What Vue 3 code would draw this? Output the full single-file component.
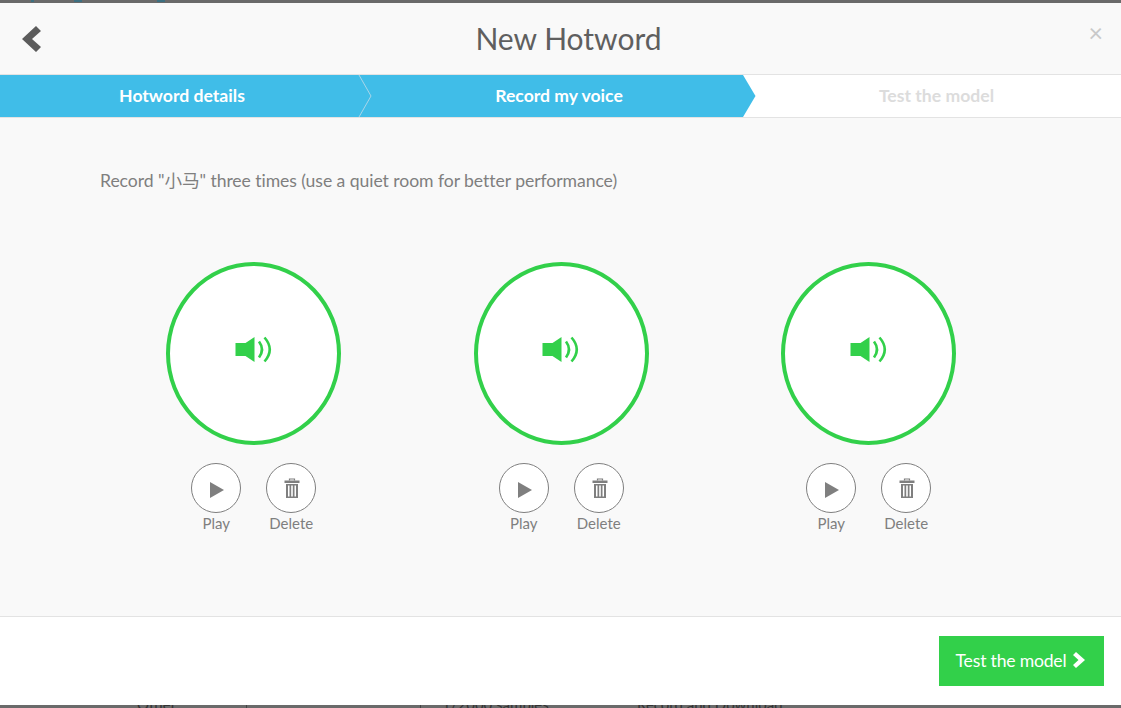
<template>
  <div class="backdrop">
    <div class="behind-top">
      <i class="mark m1"></i>
      <i class="mark m2"></i>
      <i class="mark m3"></i>
    </div>
    <div class="behind-row">
      <span class="other">Other</span>
      <i class="rule r1"></i>
      <i class="rule r2"></i>
      <span class="samples">1/2000 samples</span>
      <span class="download">Record and Download</span>
    </div>

    <main class="modal">
      <header class="modal-header">
        <button class="back" aria-label="Back">
          <svg width="20" height="26" viewBox="0 0 20 26">
            <path d="M14 0 L19 5 L10 13 L19 21 L14 26 L0 13 Z" fill="#5c5c5c" />
          </svg>
        </button>
        <h1>New Hotword</h1>
        <span class="close">×</span>
      </header>

      <nav class="steps">
        <div class="step done first">
          Hotword details
          <svg class="divider" width="14" height="42" viewBox="0 0 14 42">
            <path d="M1 0 L13 21 L1 42" fill="none" stroke="#a9d5e8" stroke-width="1" />
          </svg>
        </div>
        <div class="step done second">
          Record my voice
          <svg class="tip" width="13" height="42" viewBox="0 0 13 42">
            <path d="M0 0 L12.5 21 L0 42 Z" fill="#40bde8" />
          </svg>
        </div>
        <div class="step todo">Test the model</div>
      </nav>

      <section class="body">
        <p class="intro">Record "小马" three times (use a quiet room for better performance)</p>
        <div class="recordings">
          <div v-for="n in 3" :key="n" class="recording">
            <div class="bubble">
              <svg class="speaker" width="38" height="30" viewBox="0 0 38 30">
                <path d="M0.5 8 H10.5 L19.5 2 V27 L10.5 21 H0.5 Z" fill="#32d04a" />
                <path d="M24 6.5 Q30 14.5 24 22.5" fill="none" stroke="#32d04a" stroke-width="2.6" />
                <path d="M29.5 2.5 Q40 14.5 29.5 26.5" fill="none" stroke="#32d04a" stroke-width="2.6" />
              </svg>
            </div>
            <div class="actions">
              <div class="action">
                <button class="round" aria-label="Play">
                  <svg class="play" width="14" height="16" viewBox="0 0 14 16">
                    <path d="M0 0 L14 8 L0 16 Z" fill="#7f7f7f" />
                  </svg>
                </button>
                <span>Play</span>
              </div>
              <div class="action">
                <button class="round" aria-label="Delete">
                  <svg class="trash" width="16" height="21" viewBox="0 0 16 21">
                    <path d="M5.5 2.5 V1 H10.5 V2.5" fill="none" stroke="#7f7f7f" stroke-width="1.2" />
                    <path d="M0.5 2.5 H15.5 V5 H0.5 Z" fill="#7f7f7f" />
                    <path d="M2 6 H14 V20 H2 Z M4 7.5 V18.5 H5.5 V7.5 Z M7.2 7.5 V18.5 H8.8 V7.5 Z M10.5 7.5 V18.5 H12 V7.5 Z" fill="#7f7f7f" fill-rule="evenodd" />
                  </svg>
                </button>
                <span>Delete</span>
              </div>
            </div>
          </div>
        </div>
      </section>

      <footer class="modal-footer">
        <button class="next">
          <span>Test the model</span>
          <svg width="14" height="16" viewBox="0 0 14 16">
            <path d="M4 0 L13 8 L4 16 L1 13 L6.5 8 L1 3 Z" fill="#fff" />
          </svg>
        </button>
      </footer>
    </main>
  </div>
</template>

<script setup>
</script>

<style>
html, body { margin: 0; background: #666; }
</style>

<style scoped>
.backdrop { position: relative; width: 1121px; height: 708px; overflow: hidden; background: #6a6a6a; font-family: Lato, "Noto Sans CJK SC", sans-serif; }
.behind-top { position: absolute; left: 0; top: 0; right: 0; height: 3px; }
.mark { position: absolute; top: 0; height: 2px; background: #3d6f80; }
.m1 { left: 31px; width: 3px; }
.m2 { left: 74px; width: 8px; }
.m3 { left: 157px; width: 8px; }
.behind-row { position: absolute; left: 0; right: 0; top: 695px; height: 13px; font-size: 15px; color: #333; }
.behind-row span { position: absolute; top: 0; white-space: nowrap; }
.rule { position: absolute; bottom: 0; width: 1px; height: 3px; background: #444; }
.r1 { left: 246px; }
.r2 { left: 420px; }
.other { left: 137px; }
.samples { left: 442px; }
.download { left: 637px; }
.modal { position: absolute; left: 0; top: 3px; width: 1121px; height: 702px; display: flex; flex-direction: column; background: #fff; }

.modal-header { height: 71px; flex: none; box-sizing: content-box; display: flex; align-items: center; justify-content: center; position: relative; padding: 0 0 0 16px; background: #f9f9f9; border-bottom: 1px solid #e3e3e3; }
.modal-header h1 { margin: 0 0 2px; font-size: 30px; font-weight: 400; color: #5f5f5f; }
.back { position: absolute; left: 22px; top: 23px; padding: 0; border: 0; background: none; display: flex; }
.close { position: absolute; right: 18px; top: 14px; font-size: 25px; line-height: 30px; color: #c9c9c9; }

.steps { height: 42px; flex: none; display: grid; grid-template-columns: 364px 379px 1fr; background: #fff; border-bottom: 1px solid #e3e3e3; }
.step { position: relative; display: flex; align-items: center; justify-content: center; padding-bottom: 2px; font-size: 17.6px; font-weight: 700; }
.step.done { background: #40bde8; color: #fff; }
.step.second { padding-left: 11px; }
.step.todo { padding-left: 9px; color: #dcdcdc; }
.step.first { z-index: 1; }
.divider { position: absolute; right: -8px; top: 0; }
.tip { position: absolute; left: 100%; top: 0; }

.body { flex: 1; background: #f9f9f9; padding: 0 98.5px 0 100px; border-bottom: 1px solid #e3e3e3; }
.intro { margin: 52px 0 0; font-size: 17.6px; letter-spacing: -0.06px; line-height: 22px; color: #7f7f7f; }
.recordings { display: grid; grid-template-columns: repeat(3, 1fr); margin-top: 70px; }
.recording { display: flex; flex-direction: column; align-items: center; }
.bubble { box-sizing: border-box; width: 175px; height: 183px; border: 4px solid #32d04a; border-radius: 50%; background: #fff; display: flex; justify-content: center; padding-top: 69px; }
.speaker { display: block; }
.actions { display: flex; gap: 25px; margin-top: 18px; }
.action { display: flex; flex-direction: column; align-items: center; width: 50px; font-size: 15px; line-height: 20px; color: #7f7f7f; }
.round { box-sizing: border-box; width: 50px; height: 50px; border: 1px solid #7f7f7f; border-radius: 50%; background: #fff; padding: 0; display: flex; align-items: center; justify-content: center; }
.play { margin: 3px 0 0 2px; }
.trash { margin-left: 2px; }
.action span { white-space: nowrap; }

.modal-footer { height: 88px; flex: none; box-sizing: border-box; display: flex; justify-content: flex-end; padding: 19px 17px 0 0; background: #fff; }
.next { height: 50px; width: 165px; border: 0; background: #32d04a; color: #fff; font-family: inherit; font-size: 17.6px; letter-spacing: -0.2px; display: flex; align-items: center; justify-content: center; gap: 6px; padding: 0 1px 2px 0; }
</style>
